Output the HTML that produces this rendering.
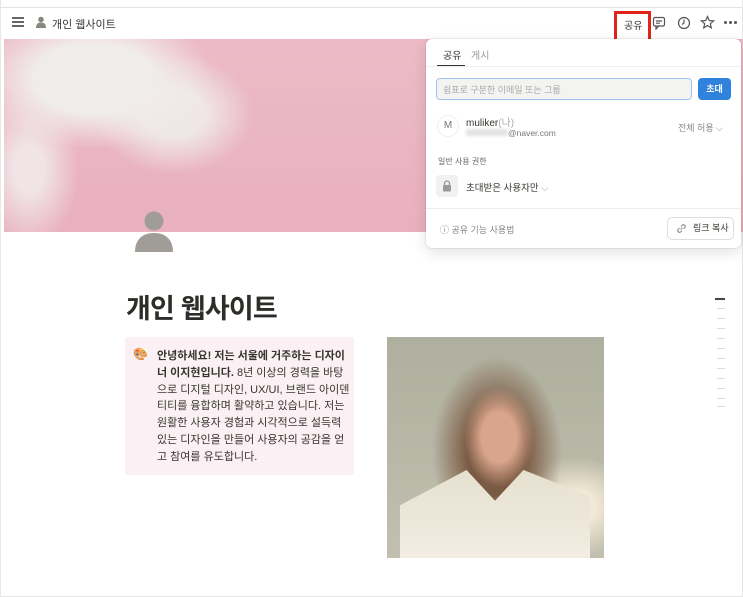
<!DOCTYPE html>
<html><head><meta charset="utf-8"><style>
*{margin:0;padding:0;box-sizing:border-box}
body{width:743px;height:597px;overflow:hidden;background:#fff;font-family:"Liberation Sans","Noto Sans CJK KR",sans-serif;color:#37352f;position:relative}
.a{position:absolute}
</style></head><body>
<div class="a" style="left:0;top:0;width:743px;height:597px;border:1px solid #e6e6e6;border-top:none"></div>
<div class="a" style="left:0;top:7px;width:743px;height:1px;background:#e3e3e3"></div>
<!-- topbar -->
<div class="a" style="left:12px;top:17px;width:12px;height:2px;background:#666;box-shadow:0 4px 0 #666,0 8px 0 #666"></div>
<svg class="a" style="left:35px;top:16px" width="12" height="12" viewBox="0 0 12 12"><circle cx="6" cy="3.5" r="2.8" fill="#8a8680"/><path d="M1 12c0-4 2-5.5 5-5.5s5 1.5 5 5.5z" fill="#8a8680"/></svg>
<div class="a" style="left:52px;top:16px;font-size:11px;color:#37352f">개인 웹사이트</div>
<div class="a" style="left:614px;top:11px;width:37px;height:31px;border:3px solid #e0241a"></div>
<div class="a" style="left:624px;top:17px;font-size:10px">공유</div>
<svg class="a" style="left:652px;top:16px" width="14" height="14" viewBox="0 0 14 14" fill="none" stroke="#555" stroke-width="1.2"><rect x="1.5" y="1.5" width="11" height="8.5" rx="1.5"/><path d="M4 10v3l3-3M4 5h6M4 7.2h4"/></svg>
<svg class="a" style="left:677px;top:16px" width="14" height="14" viewBox="0 0 14 14" fill="none" stroke="#555" stroke-width="1.2"><circle cx="7" cy="7" r="5.5"/><path d="M7 3.5V7l-2 1.5"/></svg>
<svg class="a" style="left:700px;top:15px" width="15" height="15" viewBox="0 0 15 15" fill="none" stroke="#555" stroke-width="1.2"><path d="M7.5 1.5l1.8 4 4.3.4-3.3 2.8 1 4.2-3.8-2.3-3.8 2.3 1-4.2L1.4 5.9l4.3-.4z"/></svg>
<div class="a" style="left:724px;top:21px;width:3px;height:3px;border-radius:50%;background:#555;box-shadow:5px 0 0 #555,10px 0 0 #555"></div>
<!-- cover -->
<div class="a" style="left:4px;top:39px;width:739px;height:193px;background:radial-gradient(ellipse 120px 70px at 90px 40px,#f1ecec 50%,rgba(240,230,232,0) 100%),radial-gradient(ellipse 80px 60px at 170px 75px,#efe6e7 40%,rgba(0,0,0,0) 100%),radial-gradient(ellipse 50px 80px at 25px 130px,#f0e4e6 30%,rgba(0,0,0,0) 100%),linear-gradient(#ecbac6,#e9b0bf)"></div>
<!-- avatar icon -->
<svg class="a" style="left:133px;top:209px" width="40" height="43" viewBox="0 0 40 43"><circle cx="21" cy="12" r="9.5" fill="#a09c97"/><path d="M2 43c0-13 8-19 19-19s19 6 19 19z" fill="#a09c97"/></svg>
<!-- popup -->
<div class="a" style="left:426px;top:39px;width:315px;height:209px;background:#fff;border-radius:6px;box-shadow:0 0 0 1px rgba(0,0,0,.06),0 4px 14px rgba(0,0,0,.12)">
 <div class="a" style="left:17px;top:8px;font-size:10px;color:#37352f">공유</div>
 <div class="a" style="left:45px;top:8px;font-size:10px;color:#999">게시</div>
 <div class="a" style="left:11px;top:26px;width:28px;height:2px;background:#37352f"></div>
 <div class="a" style="left:0;top:27px;width:315px;height:1px;background:#eee"></div>
 <div class="a" style="left:10px;top:39px;width:256px;height:22px;border:1.5px solid #9ec4ec;border-radius:4px;background:#f3f3f2;font-size:9px;color:#aaa;padding:4px 6px">쉼표로 구분한 이메일 또는 그룹</div>
 <div class="a" style="left:272px;top:39px;width:33px;height:22px;background:#2f83dc;border-radius:4px;color:#fff;font-size:9px;font-weight:bold;text-align:center;line-height:22px">초대</div>
 <div class="a" style="left:11px;top:76px;width:22px;height:22px;border-radius:50%;border:1px solid #eee;font-size:10px;color:#777;text-align:center;line-height:20px">M</div>
 <div class="a" style="left:40px;top:75px;font-size:10px;color:#37352f">muliker<span style="color:#aaa">(나)</span></div>
 <div class="a" style="left:40px;top:89px;font-size:8.5px;color:#777"><span style="display:inline-block;width:42px;height:7px;background:#e3e3e3;filter:blur(1.5px)"></span>@naver.com</div>
 <div class="a" style="left:252px;top:82px;font-size:9px;color:#888">전체 허용 ⌵</div>
 <div class="a" style="left:12px;top:117px;font-size:8px;color:#666">일반 사용 권한</div>
 <div class="a" style="left:10px;top:136px;width:22px;height:22px;background:#f1f1ef;border-radius:4px"></div>
 <svg class="a" style="left:16px;top:141px" width="10" height="12" viewBox="0 0 10 12"><path d="M2.5 5V3.5a2.5 2.5 0 015 0V5" fill="none" stroke="#999" stroke-width="1.3"/><rect x="1" y="5" width="8" height="6.5" rx="1" fill="#999"/></svg>
 <div class="a" style="left:40px;top:141px;font-size:9.5px;color:#37352f">초대받은 사용자만 <span style="color:#aaa">⌵</span></div>
 <div class="a" style="left:0;top:169px;width:315px;height:1px;background:#eee"></div>
 <div class="a" style="left:14px;top:184px;font-size:9px;color:#888">ⓘ 공유 기능 사용법</div>
 <div class="a" style="left:241px;top:178px;width:67px;height:23px;border:1px solid #ddd;border-radius:5px;font-size:9px;color:#37352f;line-height:21px;padding-left:25px">링크 복사</div>
 <svg class="a" style="left:250px;top:184px" width="11" height="11" viewBox="0 0 11 11" fill="none" stroke="#999" stroke-width="1.2"><path d="M4.5 6.5l2-2M3.5 5L2 6.5a1.8 1.8 0 002.5 2.5L6 7.5M7.5 6L9 4.5A1.8 1.8 0 006.5 2L5 3.5"/></svg>
</div>
<!-- title -->
<div class="a" style="left:126px;top:287px;font-size:27px;font-weight:bold;color:#2f2d29;letter-spacing:-0.8px">개인 웹사이트</div>
<!-- TOC -->
<div class="a" style="left:715px;top:298px;width:10px;height:2px;background:#444"></div>
<div class="a" style="left:717px;top:308px;width:8px;height:1px;background:#ddd;box-shadow:0 10px 0 #ddd,0 20px 0 #ddd,0 30px 0 #ddd,0 40px 0 #ddd,0 50px 0 #ddd,0 60px 0 #ddd,0 70px 0 #ddd,0 80px 0 #ddd,0 90px 0 #ddd,0 98px 0 #ddd"></div>
<!-- callout -->
<div class="a" style="left:125px;top:337px;width:229px;height:138px;background:#fbf0f3;border-radius:2px"></div>
<div class="a" style="left:133px;top:347px;font-size:12px">🎨</div>
<div class="a" style="left:157px;top:348px;width:193px;font-size:11px;line-height:16.8px;color:#37352f;word-break:break-all"><b>안녕하세요! 저는 서울에 거주하는 디자이너 이지현입니다.</b> 8년 이상의 경력을 바탕으로 디지털 디자인, UX/UI, 브랜드 아이덴티티를 융합하며 활약하고 있습니다. 저는 원활한 사용자 경험과 시각적으로 설득력 있는 디자인을 만들어 사용자의 공감을 얻고 참여를 유도합니다.</div>
<!-- photo -->
<div class="a" style="left:387px;top:337px;width:217px;height:221px;background:radial-gradient(ellipse 35px 50px at 112px 100px,#d9a58c 50%,rgba(0,0,0,0) 100%),radial-gradient(ellipse 65px 95px at 110px 115px,#7b5a43 45%,rgba(0,0,0,0) 100%),radial-gradient(ellipse 60px 50px at 190px 170px,#f3ead6 30%,rgba(0,0,0,0) 100%),linear-gradient(#aeaf9e,#c2bfae)"></div>
<div class="a" style="left:400px;top:470px;width:190px;height:88px;background:linear-gradient(#e6e0d0,#f2ede2);clip-path:polygon(0 40%,35% 0,50% 35%,65% 0,100% 30%,100% 100%,0 100%)"></div>
</body></html>
